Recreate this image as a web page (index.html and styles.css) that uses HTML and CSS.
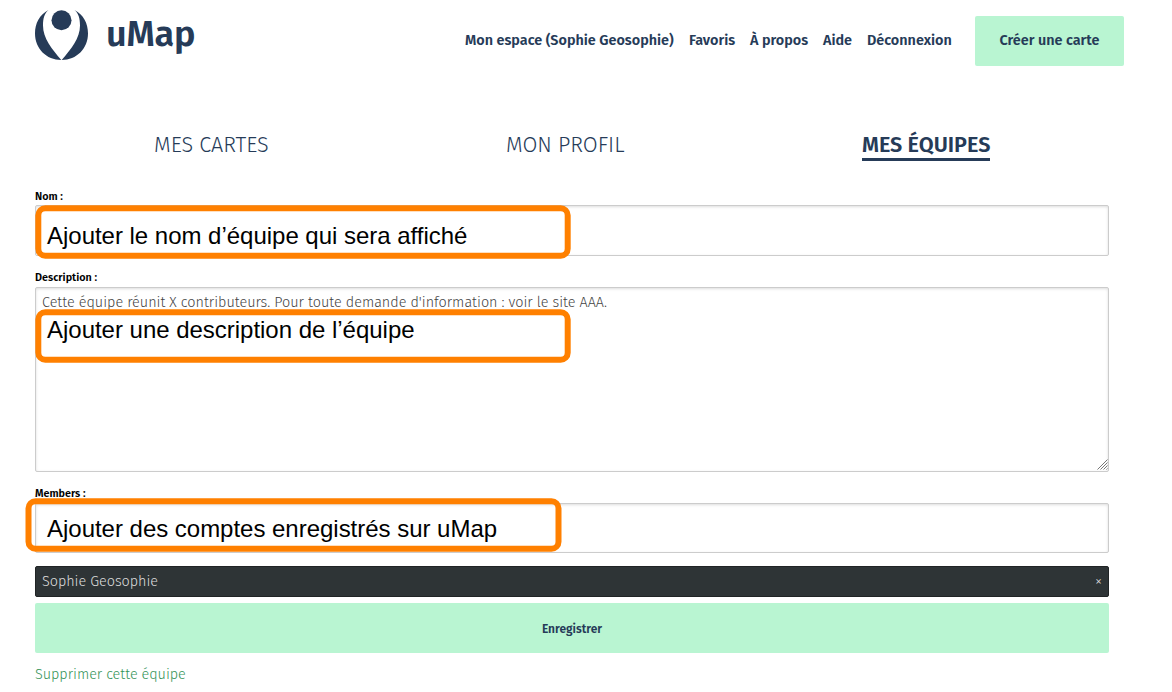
FILE: index.html
```html
<!DOCTYPE html>
<html lang="fr">
<head>
<meta charset="utf-8">
<title>uMap</title>
<link rel="stylesheet" href="styles.css">
</head>
<body>
<header class="header">
  <a class="brand">
    <svg class="logo" viewBox="0 0 53 50" width="53" height="50" fill="#263b58">
      <path d="M13.500 0C4.500 4.500 0 13.500 0 23.500C0 38.500 11.500 50 26.300 50C17 39 8 28.500 8 15.500C8 8.500 9.500 3.200 13.500 0Z"/>
      <path d="M39.500 0C48.500 4.500 53 13.500 53 23.500C53 38.500 41.500 50 26.700 50C36 39 45 28.500 45 15.500C45 8.500 43.500 3.200 39.500 0Z"/>
      <circle cx="26.500" cy="10.200" r="10"/>
    </svg>
    <span class="brand-name">uMap</span>
  </a>
  <nav class="nav">
    <a class="nav-space">Mon espace (Sophie Geosophie)</a>
    <a class="nav-fav">Favoris</a>
    <a class="nav-about">À propos</a>
    <a class="nav-help">Aide</a>
    <a class="nav-logout">Déconnexion</a>
  </nav>
  <a class="create">Créer une carte</a>
</header>
<main class="content">
  <div class="tabs">
    <a class="tab tab-maps">MES CARTES</a>
    <a class="tab tab-profile">MON PROFIL</a>
    <a class="tab tab-teams">MES ÉQUIPES</a>
  </div>
  <form class="form">
    <label class="label">Nom :</label>
    <div class="field field-name">
      <div class="note"><svg class="outline" width="537" height="55"><rect x="3.300" y="3.300" width="529.400" height="47.400" rx="7"/></svg>Ajouter le nom d’équipe qui sera affiché</div>
    </div>
    <label class="label label-desc">Description :</label>
    <div class="field field-desc">
      <textarea class="textarea">Cette équipe réunit X contributeurs. Pour toute demande d'information : voir le site AAA.</textarea>
      <svg class="grip" width="11" height="11" viewBox="0 0 11 11"><path d="M.5 10.500l10-10M3.500 10.500l7-7M6.500 10.500l4-4M9.500 10.500l1-1"/></svg>
      <div class="note note-desc"><svg class="outline" width="537" height="55"><rect x="3.300" y="3.300" width="529.400" height="47.400" rx="7"/></svg>Ajouter une description de l’équipe</div>
    </div>
    <label class="label label-members">Members :</label>
    <div class="field field-members">
      <div class="note note-members"><svg class="outline" width="537" height="55"><rect x="3.500" y="3.300" width="530" height="47.400" rx="7"/></svg>Ajouter des comptes enregistrés sur uMap</div>
    </div>
    <div class="member"><span>Sophie Geosophie</span><span class="remove">×</span></div>
    <button class="save" type="button">Enregistrer</button>
    <a class="delete">Supprimer cette équipe</a>
  </form>
</main>
</body>
</html>
```
FILE: styles.css
```css
* { box-sizing: border-box; }
body {
  margin: 0;
  height: 692px;
  overflow: hidden;
  background: #fff;
  color: #263b58;
  font-family: "Fira Sans", "Noto Sans", "Open Sans", sans-serif;
}
.header { display: flex; height: 82px; padding: 0 48px 0 35px; }
.brand { display: flex; padding-top: 10px; gap: 18px; }
.logo { display: block; }
.brand-name { font-size: 36px; font-weight: 600; line-height: 48px; letter-spacing: -.2px; }
.nav { display: flex; margin-left: auto; gap: 15px; padding-top: 30px; font-size: 14.4px; font-weight: 600; line-height: 21px; white-space: nowrap; }
.nav-space { width: 209px; }
.nav-fav { width: 46px; }
.nav-about { width: 58px; }
.nav-help { width: 29px; }
.nav-logout { width: 85px; }
.create { width: 149px; height: 50px; margin: 16px 0 0 23px; border-radius: 2px; background: #b9f5d2; font-size: 14.4px; font-weight: 600; line-height: 49px; text-align: center; }
.content { padding: 50px 63px 0 35px; }
.tabs { display: flex; justify-content: space-around; height: 57px; }
.tab { height: 29px; font-size: 21.6px; font-weight: 300; line-height: 26px; white-space: nowrap; }
.tab-maps { width: 114px; }
.tab-profile { width: 118px; }
.tab-teams { width: 128px; border-bottom: 3px solid #263b58; font-weight: 600; }
.form { display: flex; flex-direction: column; }
.label { height: 16px; color: #000; font-size: 10.8px; font-weight: 600; line-height: 15px; }
.label-desc, .label-members { height: 17px; margin-top: 14px; }
.field { position: relative; border: 1px solid #ccc; border-radius: 2px; box-shadow: inset 0 1px 3px #ddd; }
.field-name { height: 51px; }
.field-desc { height: 185px; }
.field-members { height: 50px; }
.textarea { display: block; width: 100%; height: 183px; padding: 4px 6px; border: 0; outline: 0; background: transparent; color: #444; font: 300 14.4px/21px "Fira Sans", "Noto Sans", sans-serif; resize: none; }
.grip { position: absolute; right: 0; bottom: 1px; fill: none; stroke: #777; stroke-width: 1; }
.note { position: absolute; left: -1px; top: -1px; width: 537px; height: 55px; padding: 6px 0 0 12px; color: #000; font: 24px/49px "Liberation Sans", Arial, sans-serif; letter-spacing: -.02px; white-space: nowrap; }
.outline { position: absolute; left: 0; top: 0; fill: none; stroke: #ff8000; stroke-width: 6; }
.note-desc { top: 21px; line-height: 29px; }
.note-members { left: -11px; top: -6px; padding-left: 22px; }
.member { display: flex; justify-content: space-between; height: 31px; margin-top: 13px; padding: 0 6px; border: 1px solid #202425; border-radius: 2px; background: #2e3436; color: #ddd; font-size: 14.4px; font-weight: 300; line-height: 29px; letter-spacing: -.03px; }
.remove { font-size: 14.4px; }
.save { height: 50px; margin-top: 6px; border: 0; border-radius: 2px; background: #b9f5d2; color: #263b58; font: 600 12px/50px "Fira Sans", "Noto Sans", sans-serif; }
.delete { margin-top: 11px; color: #349358; font-size: 14.4px; font-weight: 300; line-height: 21px; letter-spacing: -.03px; }
```
